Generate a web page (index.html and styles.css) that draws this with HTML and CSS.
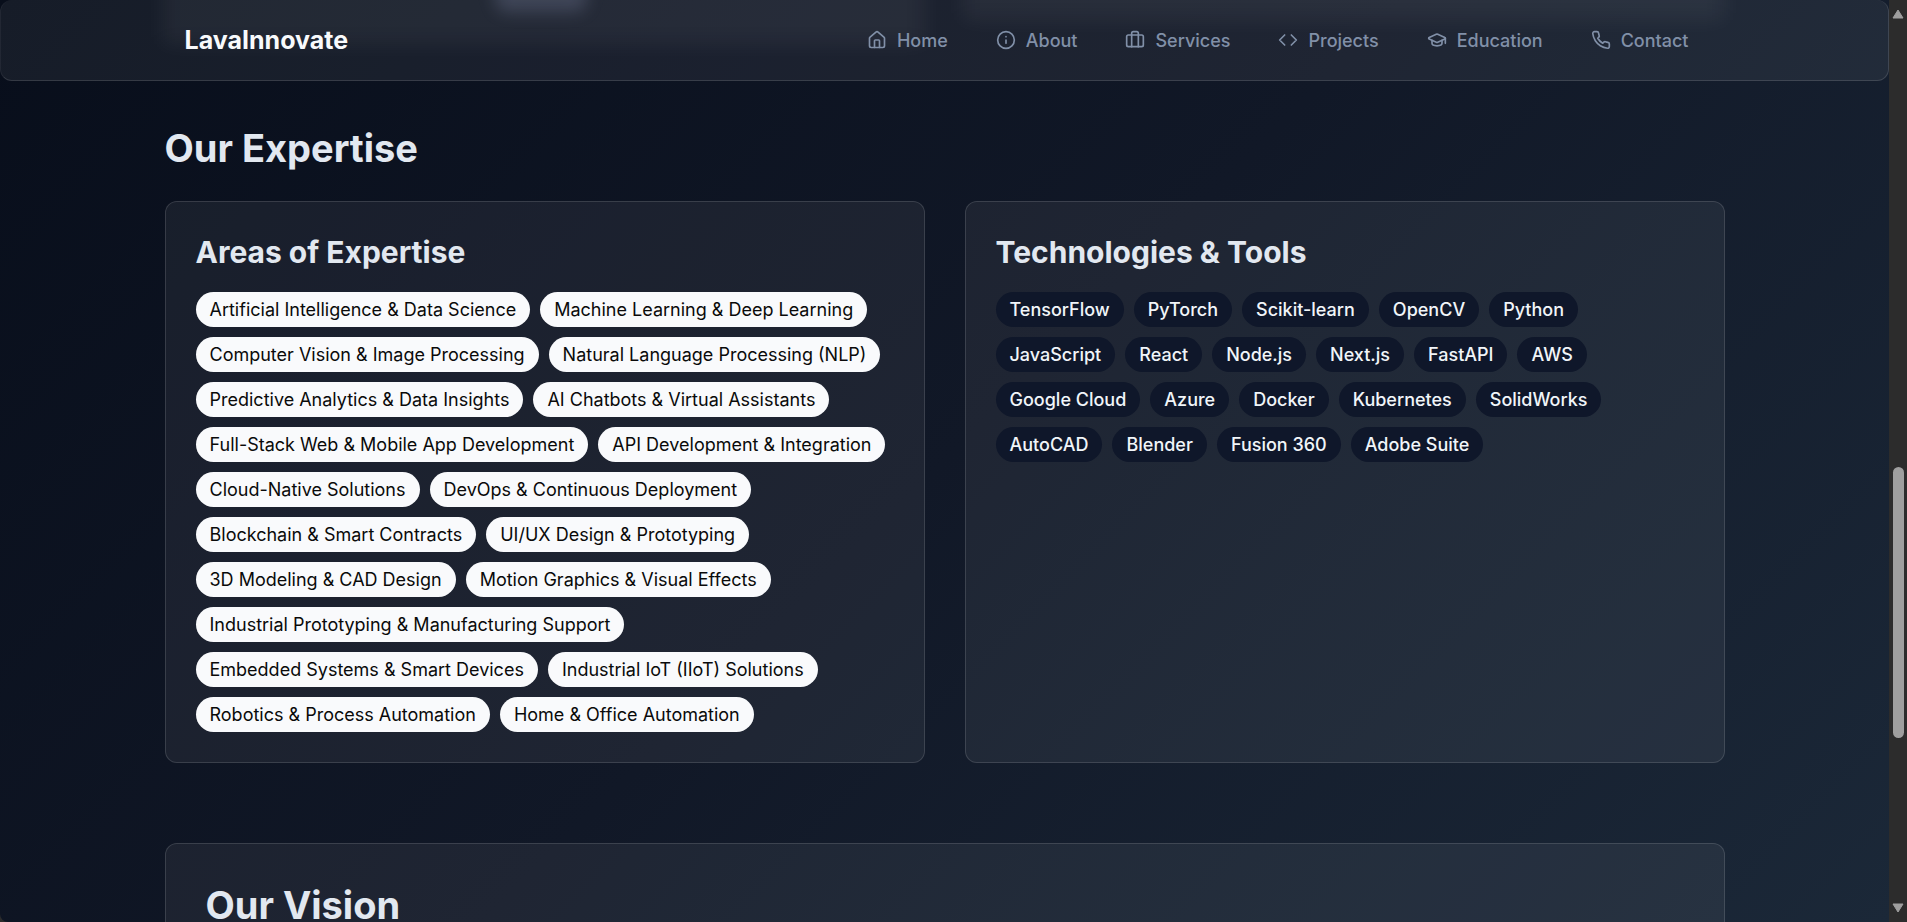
FILE: index.html
```html
<!DOCTYPE html>
<html lang="en">
<head>
<meta charset="utf-8">
<title>LavaInnovate</title>
<link rel="stylesheet" href="styles.css">
</head>
<body>
<div class="page">
  <header class="navbar">
    <div class="glow glow-left"></div>
    <div class="glow glow-right"></div>
    <div class="glow-spot"></div>
    <div class="navbar-inner">
      <a class="logo" href="#">LavaInnovate</a>
      <nav class="nav-links">
        <a class="nav-link" href="#"><svg class="icon" viewBox="0 0 24 24"><path d="M15 21v-8a1 1 0 0 0-1-1h-4a1 1 0 0 0-1 1v8"/><path d="M3 10a2 2 0 0 1 .709-1.528l7-5.999a2 2 0 0 1 2.582 0l7 5.999A2 2 0 0 1 21 10v9a2 2 0 0 1-2 2H5a2 2 0 0 1-2-2z"/></svg>Home</a>
        <a class="nav-link" href="#"><svg class="icon" viewBox="0 0 24 24"><circle cx="12" cy="12" r="10"/><path d="M12 16v-4M12 8h.01"/></svg>About</a>
        <a class="nav-link" href="#"><svg class="icon" viewBox="0 0 24 24"><rect x="2" y="6" width="20" height="14" rx="2"/><path d="M16 20V4a2 2 0 0 0-2-2h-4a2 2 0 0 0-2 2v16"/></svg>Services</a>
        <a class="nav-link" href="#"><svg class="icon" viewBox="0 0 24 24"><path d="m16 18 6-6-6-6M8 6l-6 6 6 6"/></svg>Projects</a>
        <a class="nav-link" href="#"><svg class="icon" viewBox="0 0 24 24"><path d="M21.420 10.922a1 1 0 0 0-.019-1.838L12.830 5.180a2 2 0 0 0-1.660 0L2.600 9.080a1 1 0 0 0 0 1.832l8.570 3.908a2 2 0 0 0 1.660 0z"/><path d="M22 10v6M6 12.500V16a6 3 0 0 0 12 0v-3.500"/></svg>Education</a>
        <a class="nav-link" href="#"><svg class="icon" viewBox="0 0 24 24"><path d="M22 16.920v3a2 2 0 0 1-2.180 2 19.790 19.790 0 0 1-8.630-3.070 19.500 19.500 0 0 1-6-6 19.790 19.790 0 0 1-3.070-8.670A2 2 0 0 1 4.110 2h3a2 2 0 0 1 2 1.720c.127.960.361 1.903.700 2.810a2 2 0 0 1-.450 2.110L8.090 9.910a16 16 0 0 0 6 6l1.270-1.270a2 2 0 0 1 2.110-.450c.907.339 1.850.573 2.810.700A2 2 0 0 1 22 16.920z"/></svg>Contact</a>
      </nav>
    </div>
  </header>
  <main class="container">
    <h2 class="section-title">Our Expertise</h2>
    <div class="grid">
      <section class="card">
        <h3 class="card-title">Areas of Expertise</h3>
        <ul class="tags tags-light">
          <li>Artificial Intelligence &amp; Data Science</li>
          <li>Machine Learning &amp; Deep Learning</li>
          <li>Computer Vision &amp; Image Processing</li>
          <li>Natural Language Processing (NLP)</li>
          <li>Predictive Analytics &amp; Data Insights</li>
          <li>AI Chatbots &amp; Virtual Assistants</li>
          <li>Full-Stack Web &amp; Mobile App Development</li>
          <li>API Development &amp; Integration</li>
          <li>Cloud-Native Solutions</li>
          <li>DevOps &amp; Continuous Deployment</li>
          <li>Blockchain &amp; Smart Contracts</li>
          <li>UI/UX Design &amp; Prototyping</li>
          <li>3D Modeling &amp; CAD Design</li>
          <li>Motion Graphics &amp; Visual Effects</li>
          <li>Industrial Prototyping &amp; Manufacturing Support</li>
          <li>Embedded Systems &amp; Smart Devices</li>
          <li>Industrial IoT (IIoT) Solutions</li>
          <li>Robotics &amp; Process Automation</li>
          <li>Home &amp; Office Automation</li>
        </ul>
      </section>
      <section class="card">
        <h3 class="card-title">Technologies &amp; Tools</h3>
        <ul class="tags tags-dark">
          <li>TensorFlow</li>
          <li>PyTorch</li>
          <li>Scikit-learn</li>
          <li>OpenCV</li>
          <li>Python</li>
          <li>JavaScript</li>
          <li>React</li>
          <li>Node.js</li>
          <li>Next.js</li>
          <li>FastAPI</li>
          <li>AWS</li>
          <li>Google Cloud</li>
          <li>Azure</li>
          <li>Docker</li>
          <li>Kubernetes</li>
          <li>SolidWorks</li>
          <li>AutoCAD</li>
          <li>Blender</li>
          <li>Fusion 360</li>
          <li>Adobe Suite</li>
        </ul>
      </section>
    </div>
    <section class="card card-vision">
      <h2 class="section-title">Our Vision</h2>
    </section>
  </main>
</div>
<div class="scrollbar" aria-hidden="true">
  <svg class="arrow" viewBox="0 0 12 10"><path d="M6 1 11 9H1z"/></svg>
  <div class="track"><div class="thumb"></div></div>
  <svg class="arrow" viewBox="0 0 12 10"><path d="M6 9 1 1h10z"/></svg>
</div>
</body>
</html>
```
FILE: styles.css
```css
* {
  box-sizing: border-box;
  margin: 0;
  padding: 0;
}

body {
  display: flex;
  height: 100vh;
  overflow: hidden;
  background: #2c2c2c;
  font-family: Inter, sans-serif;
  font-size: 18px;
  line-height: 25px;
  color: #e2e8f0;
}

.page {
  flex: 1;
  min-width: 0;
  overflow: hidden;
  border-bottom-left-radius: 8px;
  background: linear-gradient(135deg, #080e1b 0%, #111827 50%, #1b2838 100%);
}

.navbar {
  position: relative;
  overflow: hidden;
  border: 1px solid rgba(255, 255, 255, 0.13);
  border-top: 0;
  border-left-color: rgba(255, 255, 255, 0.05);
  border-radius: 12px;
  background: rgba(255, 255, 255, 0.06);
}

.navbar-inner {
  position: relative;
  display: flex;
  align-items: center;
  justify-content: space-between;
  max-width: 1560px;
  height: 80px;
  margin: 0 auto;
  padding: 0 20px;
}

.glow {
  position: absolute;
  background: rgba(255, 255, 255, 0.05);
  filter: blur(10px);
}

.glow-left {
  top: -40px;
  left: 8.6%;
  width: 40.3%;
  height: 84px;
}

.glow-right {
  top: -40px;
  left: 51%;
  width: 40.3%;
  height: 60px;
}

.glow-spot {
  position: absolute;
  top: -30px;
  left: 26.2%;
  width: 92px;
  height: 42px;
  border-radius: 12px;
  background: rgba(170, 180, 220, 0.2);
  filter: blur(8px);
}

.logo {
  color: #f8fafc;
  font-size: 25px;
  font-weight: 700;
  line-height: 32px;
  text-decoration: none;
}

.nav-links {
  display: flex;
  gap: 16px;
}

.nav-link {
  display: flex;
  align-items: center;
  gap: 10px;
  padding: 8px 16px;
  color: #8190a8;
  font-weight: 500;
  text-decoration: none;
}

.icon {
  width: 20px;
  height: 20px;
  fill: none;
  stroke: currentColor;
  stroke-width: 2;
  stroke-linecap: round;
  stroke-linejoin: round;
}

.container {
  max-width: 1560px;
  margin: 0 auto;
  padding-top: 46px;
}

.section-title {
  font-size: 38px;
  font-weight: 700;
  line-height: 42px;
}

.grid {
  display: grid;
  grid-template-columns: 1fr 1fr;
  gap: 40px;
  margin-top: 32px;
}

.card {
  padding: 30px;
  border: 1px solid rgba(255, 255, 255, 0.13);
  border-radius: 12px;
  background: rgba(255, 255, 255, 0.06);
}

.card-title {
  font-size: 30px;
  font-weight: 700;
  line-height: 40px;
}

.tags {
  display: flex;
  flex-wrap: wrap;
  gap: 10px;
  margin-top: 20px;
  list-style: none;
}

.tags li {
  padding: 5px 14px;
  border-radius: 20px;
}

.tags-light li {
  background: #f9fafc;
  color: #0a0a0a;
}

.tags-dark li {
  background: #0f172a;
  color: #f1f5f9;
  font-weight: 500;
}

.card-vision {
  margin-top: 80px;
  padding: 40px;
}

.scrollbar {
  display: flex;
  flex-direction: column;
  align-items: center;
  justify-content: space-between;
  width: 18px;
  padding: 9px 0;
  background: #2c2c2c;
}

.arrow {
  width: 12px;
  height: 10px;
  fill: #9f9f9f;
  stroke: #9f9f9f;
  stroke-linejoin: round;
}

.track {
  display: flex;
  flex: 1;
  flex-direction: column;
}

.track::before {
  content: "";
  flex: 448;
}

.track::after {
  content: "";
  flex: 165;
}

.thumb {
  flex: 271;
  width: 11px;
  border-radius: 6px;
  background: #9f9f9f;
}
```
